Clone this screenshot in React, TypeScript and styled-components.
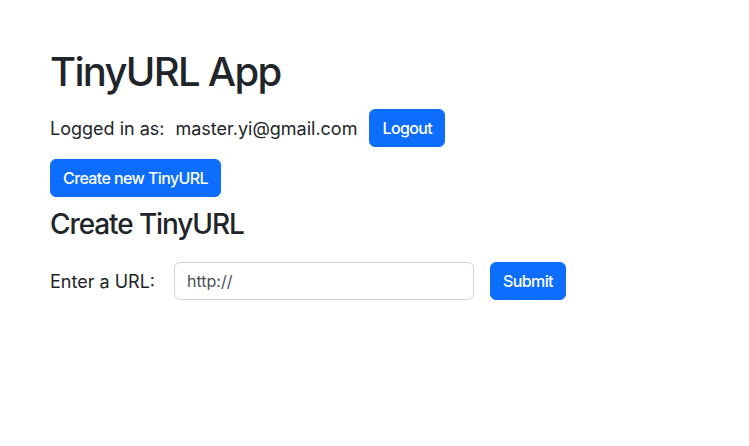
import styled, { createGlobalStyle } from "styled-components";

const GlobalStyle = createGlobalStyle`
  html, body {
    margin: 0;
    padding: 0;
    background: #fff;
    color: #212529;
    font-family: Inter, "Liberation Sans", Arial, sans-serif;
  }
  * { box-sizing: border-box; }
`;

const Page = styled.div`
  padding: 48px 50px;
  display: flex;
  flex-direction: column;
  align-items: flex-start;
`;

const Title = styled.h1`
  margin: 0 0 13px;
  font-size: 40px;
  font-weight: 500;
  line-height: 48px;
  letter-spacing: -1.7px;
`;

const UserRow = styled.div`
  display: flex;
  align-items: center;
  gap: 12px;
  font-size: 18px;
  margin-bottom: 12px;
`;

const Email = styled.span`
  margin-left: 11px;
`;

const Button = styled.button`
  height: 38px;
  padding: 0 12px;
  border: 1px solid #0d6efd;
  border-radius: 6px;
  background: #0d6efd;
  color: #fff;
  font-family: inherit;
  font-size: 16px;
  font-weight: 500;
  letter-spacing: -0.6px;
  cursor: pointer;
`;

const SubTitle = styled.h3`
  margin: 10px 0 0;
  font-size: 28px;
  font-weight: 500;
  line-height: 34px;
  letter-spacing: -1.1px;
`;

const Form = styled.form`
  display: flex;
  align-items: center;
  margin-top: 21px;
`;

const Label = styled.label`
  font-size: 18px;
  margin-right: 19px;
`;

const Input = styled.input`
  width: 300px;
  height: 38px;
  padding: 0 12px;
  border: 1px solid #ced4da;
  border-radius: 6px;
  font-family: inherit;
  font-size: 16px;
  color: #495057;
  outline: none;
  margin-right: 16px;
`;

export default function App() {
  return (
    <>
      <GlobalStyle />
      <Page>
        <Title>TinyURL App</Title>
        <UserRow>
          <span>
            Logged in as:<Email>master.yi@gmail.com</Email>
          </span>
          <Button type="button">Logout</Button>
        </UserRow>
        <Button type="button">Create new TinyURL</Button>
        <SubTitle>Create TinyURL</SubTitle>
        <Form onSubmit={(e) => e.preventDefault()}>
          <Label htmlFor="url">Enter a URL:</Label>
          <Input id="url" defaultValue="http://" />
          <Button type="submit">Submit</Button>
        </Form>
      </Page>
    </>
  );
}
